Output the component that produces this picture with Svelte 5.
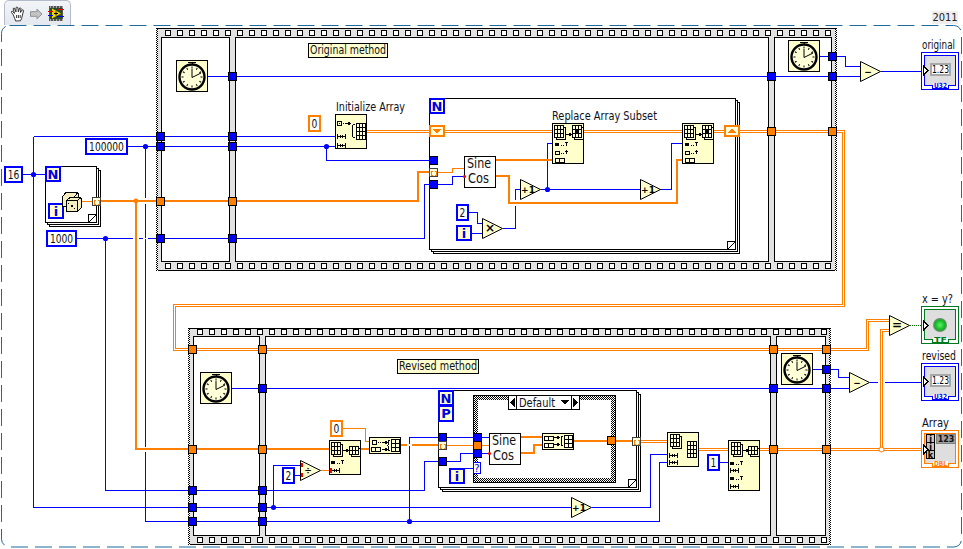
<script>
  const range = (a, n, s) => Array.from({ length: n }, (_, i) => a + i * s);

  const frames = [
    { x: 156, y: 28, r: 836.5, b: 270.5, top: 37.5, bot: 261.5, hx: 165.5, hn: 56,
      cells: [[161.5, 229.5], [235.5, 768.5], [774.5, 831.5]], ht: 30.5, hb: 263.5 },
    { x: 188, y: 327.5, r: 830.5, b: 544.5, top: 336.5, bot: 535.5, hx: 197.5, hn: 53,
      cells: [[193.5, 259.5], [265.5, 770.5], [776.5, 825.5]], ht: 329.5, hb: 537.5 }
  ];

  const blue = [
    'M33.5 136.5H335', 'M128 146.5H335', 'M326.5 146.5V160.5H429', 'M77 238.5H424.5V184.5H429',
    'M208 76.5H860', 'M820 56.5H845.5V66.5H860', 'M881 71.5H921',
    'M22 174.5H45', 'M33.5 136.5V507.5H571', 'M592 507.5H650.5V454.5H667',
    'M145.5 146.5V521.5H659.5V462.5H667', 'M105.5 238.5V490.5H424.5V461.5H439',
    'M273.5 507.5V465.5H300', 'M295 475.5H300', 'M409.5 521.5V437.5H439',
    'M232 388.5H849', 'M813 369.5H838.5V377.5H849', 'M870 382.5H921',
    'M447 437.5H473', 'M447 461.5H460.5V453.5H473', 'M465 468.5H473',
    'M482 437.5H489', 'M482 453.5H489',
    'M438 184.5H452.5V176.5H464', 'M541 189.5H640', 'M547.5 189.5V143.5H552',
    'M660 189.5H671.5V143.5H682', 'M503 228.5H515.5V189.5H520', 'M469 212.5H477.5V223.5H482', 'M472 233.5H482',
    'M720 462.5H728'
  ];
  const gaps = [
    [133, 238, 6, 1], [143, 238, 5, 1], [145, 198, 1, 6], [513, 200, 5, 6], [145, 447, 1, 5], [878, 382, 7, 1], [407, 444, 5, 2]
  ];
  const thick = [
    'M100 201H418V172H429', 'M136 201V449H329', 'M496 160H552', 'M496 176H509V203H677V160H682',
    'M361 449H369', 'M401 445H407', 'M412 445H438', 'M521 437H542', 'M521 453H534V445H542',
    'M574 441H607', 'M615 441H632'
  ];
  const thin = ['M438 172.5H452.5V168.5H464', 'M343 428.5H365.5V441.5H369', 'M321 470.5H330', 'M447 445.5H473', 'M482 445.5H489', 'M81 201.5H92'];
  const dbl = [
    'M367 131.5H429', 'M445 131.5H552', 'M584 131.5H682', 'M714 131.5H724',
    'M740 131.5H843.5V305.5H174.5V349.5H192', 'M192 349.5H867.5V320.5H889',
    'M640 441.5H667', 'M699 449.5H729', 'M760 449.5H921', 'M881.5 449.5V330.5H889'
  ];
  const dots = [[33.5, 174.5], [145.5, 146.5], [326.5, 146.5], [105.5, 238.5], [547.5, 189.5], [273.5, 507.5], [409.5, 521.5]];

  const blueT = [
    [156.5, 136.5], [156.5, 146.5], [156.5, 238.5], [228.5, 136.5], [228.5, 146.5], [228.5, 238.5], [228.5, 76.5],
    [767.5, 76.5], [828.5, 76.5], [828.5, 56.5],
    [188.5, 490.5], [188.5, 507.5], [188.5, 521.5], [258.5, 490.5], [258.5, 507.5], [258.5, 521.5], [258.5, 388.5],
    [769.5, 388.5], [822.5, 388.5], [822.5, 369.5],
    [429.5, 160.5], [429.5, 184.5], [438.5, 437.5], [438.5, 461.5], [473.5, 437.5], [473.5, 453.5]
  ];
  const orangeT = [
    [156.5, 201.5], [228.5, 201.5], [767.5, 131.5], [828.5, 131.5],
    [188.5, 349.5], [188.5, 449.5], [258.5, 349.5], [258.5, 449.5], [769.5, 349.5], [769.5, 449.5], [822.5, 349.5], [822.5, 449.5],
    [473.5, 445.5], [607.5, 440.5]
  ];
  const arrT = [[92.5, 197.5], [429.5, 168.5], [438.5, 441.5], [632.5, 437.5]];
  const clocks = [[176, 60], [788, 40], [200, 372], [781, 353]];
  const ticks = range(0, 12, 30);
</script>

{#snippet grid(x, y, cols, rows, cw, ch)}
  <rect class="cell" {x} {y} width={cols * cw} height={rows * ch} />
  {#each range(1, cols - 1, 1) as c}<line class="ink" x1={x + c * cw} x2={x + c * cw} y1={y} y2={y + rows * ch} />{/each}
  {#each range(1, rows - 1, 1) as r}<line class="ink" x1={x} x2={x + cols * cw} y1={y + r * ch} y2={y + r * ch} />{/each}
{/snippet}
{#snippet stack(x, y, cols, rows, cw, ch)}
  <rect class="cell" x={x + 2.5} y={y + 2.5} width={cols * cw} height={rows * ch} />
  {@render grid(x + .5, y + .5, cols, rows, cw, ch)}
{/snippet}
{#snippet len(x, y)}
  <path class="ink" d="M{x + .5} {y - 2}V{y + 3}M{x + 8.5} {y - 2}V{y + 3}M{x} {y + .5}H{x + 9}M{x + 3.5} {y - 1}V{y + 2}M{x + 5.5} {y - 1}V{y + 2}" />
{/snippet}
{#snippet idx(x, y)}
  <rect class="solid" {x} y={y - 1} width="4" height="3" />
  <path class="ink" d="M{x + 6} {y + 1.5}h1M{x + 8} {y + 1.5}h1M{x + 11.5} {y - 2}v4M{x + 10} {y - 1.5}h3" />
{/snippet}
{#snippet arrow(x, y)}
  <path class="ink" d="M{x} {y + .5}h4" />
  <path class="solid" d="M{x + 3} {y - 1.5}l3 2l-3 2z" />
{/snippet}
{#snippet pill(x, y)}
  <rect class="cell" x={x + .5} y={y + .5} width="9" height="4" />
  <line class="ink" x1={x + 4.5} x2={x + 4.5} y1={y} y2={y + 4} />
{/snippet}
{#snippet node(x, y, w, h)}
  <rect class="node" x={x + .5} y={y + .5} width={w - 1} height={h - 1} />
{/snippet}
{#snippet box(x, y, w, h, color, label)}
  <rect class="{color}-box" x={x + 1} y={y + 1} width={w - 2} height={h - 2} />
  <text class="num" x={x + w / 2} y={y + h - 4} textLength={label.length * 5.8} lengthAdjust="spacingAndGlyphs">{label}</text>
{/snippet}
{#snippet tri(x, y, w, h, label, size)}
  <polygon class="tri" points="{x},{y} {x + w},{y + h / 2} {x},{y + h}" />
  <text class="op {size}" x={x + 7.5} y={y + h / 2 + 3.5}>{label}</text>
{/snippet}
{#snippet sine(x, y)}
  <rect class="white" x={x + .5} y={y + .5} width="31" height="31" />
  <text class="big" x={x + 3} y={y + 12} textLength="24" lengthAdjust="spacingAndGlyphs">Sine</text>
  <text class="big" x={x + 4} y={y + 27} textLength="21" lengthAdjust="spacingAndGlyphs">Cos</text>
  <circle class="red" cx={x + .5} cy={y + 20.5} r="1.6" />
{/snippet}
{#snippet loop(x, y, r, b)}
  <rect class="white" x={x + 4} y={y + 4} width={r - x} height={b - y} />
  <rect class="white" x={x + 2} y={y + 2} width={r - x} height={b - y} />
  <rect class="white" {x} {y} width={r - x} height={b - y} />
  <path class="fold" d="M{r} {b - 8}L{r - 8} {b}V{b - 8}Z" />
{/snippet}
{#snippet indicator(x, y, color, tag)}
  <rect class="{color}-line paper" x={x + .5} y={y + .5} width="37" height="37" />
  <path class="{color}-line pane" d="M{x + 3.5} {y + 3.5}H{x + 34.5}V{y + 33.5}H{x + 27.5}V{y + 36.5}H{x + 11.5}V{y + 33.5}H{x + 3.5}Z" />
  <rect class="white-flat" x={x + 12} y={y + 31} width="15" height="5" />
  <text class="tag {color}-text" x={x + 19.5} y={y + 36} textLength="13" lengthAdjust="spacingAndGlyphs">{tag}</text>
{/snippet}
{#snippet numeric(x, y)}
  <rect class="well" x={x + 9} y={y + 11} width="21" height="13" />
  <rect class="white-flat" x={x + 11} y={y + 13} width="17" height="9" />
  <text class="val" x={x + 19.5} y={y + 21} textLength="17" lengthAdjust="spacingAndGlyphs">1.23</text>
  <polygon class="pin" points="{x + 2.5},{y + 14} {x + 7},{y + 18.5} {x + 2.5},{y + 23}" />
{/snippet}

<div class="page">
  <header class="bar">
    <div class="tab">
      <svg class="ico" width="16" height="16" viewBox="0 0 16 16">
        <path class="hand" d="M3 8.5L1.5 6.5Q1 5 2.5 5.3L4.5 7.5L3.2 3Q3.2 1.7 4.4 2.2L6 6L6 1.6Q6.8 .5 7.8 1.6L8.4 6L9.6 2Q10.6 1.5 11 2.6L10.4 6.5L12.3 3.8Q13.4 3.6 13.5 4.8L12.2 10Q11.8 12.6 10.5 14.8L5.6 15Q5 12.5 3 8.5Z" />
        <path class="hand" d="M6.6 9v3M8.4 9v3M10.2 9v3" />
      </svg>
      <svg class="ico" width="13" height="12" viewBox="0 0 14 12">
        <path class="go" d="M.5 3.5H7.5V.8L13 6L7.5 11.2V8.5H.5Z" />
      </svg>
      <svg class="ico vi-ico" width="16" height="15" viewBox="0 0 16 15">
        <rect class="film" x="1" width="14" height="15" />
        <path class="perf" d="M2 1h1M5 1h1M8 1h1M11 1h1M14 1h1M2 14h1M5 14h1M8 14h1M11 14h1M14 14h1" />
        <rect class="film-in" x="2" y="2" width="12" height="11" />
        <polygon class="vi" points="4,2.5 13,7.5 4,12.5" />
        <path class="vi-r" d="M0 5.5H5M9 3.5H16" />
        <path class="vi-b" d="M0 9.5H5M9 10.5H16" />
        <path class="vi-k" d="M6 7.5h4M8 5.5v4" />
      </svg>
    </div>
    <span class="year">2011</span>
  </header>

  <svg class="diagram" width="963" height="524" viewBox="0 25 963 524">
    <defs>
      <pattern id="checker" width="2" height="2" patternUnits="userSpaceOnUse">
        <rect class="white-flat" width="2" height="2" />
        <rect class="solid" width="1" height="1" />
        <rect class="solid" x="1" y="1" width="1" height="1" />
      </pattern>
      <radialGradient id="led">
        <stop offset="0" stop-color="#5cf06a" />
        <stop offset=".7" stop-color="#10b820" />
        <stop offset="1" stop-color="#808080" />
      </radialGradient>
    </defs>

    <rect class="diagram-edge" x="1.5" y="25.5" width="960" height="521.5" rx="8" />

    {#each frames as f}
      <rect class="strip" x={f.x + .5} y={f.y + .5} width={f.r - f.x - .5} height={f.b - f.y - .5} />
      <rect class="check" x={f.x} y={f.y + 1} width="2" height={f.b - f.y - 1} />
      <rect class="check" x={f.r - 1.5} y={f.y + 1} width="2" height={f.b - f.y - 1} />
      {#each f.cells as c}
        <rect class="white" x={c[0]} y={f.top} width={c[1] - c[0]} height={f.bot - f.top} />
      {/each}
      {#each range(f.hx, f.hn, 12) as hx}
        <rect class="hole" x={hx} y={f.ht} width="5" height="5" />
        <rect class="hole" x={hx} y={f.hb} width="5" height="5" />
      {/each}
    {/each}

    <!-- Structures -->
    {@render loop(45.5, 166.5, 96.5, 222.5)}
    {@render loop(429.5, 98.5, 735.5, 249.5)}
    {@render loop(438.5, 390.5, 636.5, 487.5)}

    <rect class="case" x="473.5" y="395.5" width="142" height="87" />
    <rect class="white-flat" x="478" y="400" width="133" height="78" />

    <!-- Wires -->
    {#each blue as d}<path class="w-blue" {d} />{/each}
    {#each gaps as g}<rect class="white-flat" x={g[0]} y={g[1]} width={g[2]} height={g[3]} />{/each}
    {#each thin as d}<path class="w-thin" {d} />{/each}
    {#each thick as d}<path class="w-thick" {d} />{/each}
    {#each dbl as d}<path class="w-dbl-o" {d} /><path class="w-dbl-w" {d} />{/each}
    <path class="w-bool" d="M910 325.5H921" />
    {#each dots as d}<circle class="dot" cx={d[0]} cy={d[1]} r="2.6" />{/each}
    <circle class="dot-o" cx="136" cy="201" r="2.4" />
    <circle class="ring" cx="881.5" cy="449.5" r="2.5" />

    <!-- Case selector -->
    <rect class="white" x="508.5" y="395.5" width="71" height="14" />
    <path class="ink" d="M516.5 395.5V409.5M571.5 395.5V409.5" />
    <polygon class="solid" points="515,398 510,402.5 515,407" />
    <polygon class="solid" points="573,398 578,402.5 573,407" />
    <polygon class="solid" points="561,400 569,400 565,405" />
    <text class="lbl" x="519" y="406.5" textLength="36" lengthAdjust="spacingAndGlyphs">Default</text>

    <!-- Tunnels -->
    {#each blueT as t}<rect class="tun-b" x={t[0]} y={t[1] - 4} width="8" height="8" />{/each}
    {#each orangeT as t}<rect class="tun-o" x={t[0]} y={t[1] - 4} width="8" height="8" />{/each}
    {#each arrT as t}
      <rect class="tun-a" x={t[0]} y={t[1]} width="8" height="8" />
      <path class="brk" d="M{t[0] + 3.5} {t[1] + 2.5}h-1.5v4h1.5M{t[0] + 5} {t[1] + 2.5}h1.5v4h-1.5" />
    {/each}
    <rect class="sel" x="473.5" y="462.5" width="7" height="11" />
    <text class="q" x="477" y="472">?</text>

    <!-- Shift registers -->
    <rect class="shift" x="430" y="126" width="14" height="10" />
    <path class="sh-f" d="M433 129h8l-4 4.5z" />
    <rect class="shift" x="725" y="126" width="14" height="10" />
    <path class="sh-f" d="M728 133h8l-4 -4.5z" />

    <!-- Clocks -->
    {#each clocks as c}
      <rect class="node" x={c[0] + .5} y={c[1] + .5} width="31" height="31" />
      <circle class="face" cx={c[0] + 16} cy={c[1] + 17} r="12.5" />
      <path class="knob" d="M{c[0] + 12} {c[1] + 2.5}h8M{c[0] + 16} {c[1] + 2}v2.5" />
      {#each ticks as a}
        <line class="thin-k" x1={c[0] + 16} x2={c[0] + 16} y1={c[1] + 6.5} y2={c[1] + 8.5} transform="rotate({a} {c[0] + 16} {c[1] + 17})" />
      {/each}
      <path class="thin-k" d="M{c[0] + 16} {c[1] + 9}V{c[1] + 17.5}L{c[0] + 25} {c[1] + 13}" />
    {/each}

    <!-- Small loop content -->
    <rect class="n-box" x="46" y="167" width="14" height="14" />
    <text class="term" x="53" y="179">N</text>
    <rect class="n-box" x="49" y="204" width="14" height="14" />
    <text class="term" x="56" y="216">i</text>
    <path class="die" d="M62.5 196.5L66 192.5H78L74.5 196.5V206.5H62.5Z" />
    <path class="die" d="M78 192.5V203L74.5 206.5V196.5Z" />
    <path class="die" d="M66.5 200.5L70 197.5H81V208L77.5 211.5H66.5Z" />
    <path class="ink" d="M66.5 200.5H77.5V211.5M77.5 200.5L81 197.5" />
    <rect class="solid" x="71" y="205" width="2" height="2" />
    <rect class="solid" x="68" y="203" width="1" height="1" />
    <rect class="solid" x="74" y="208" width="1" height="1" />

    <!-- Constants -->
    {@render box(4, 166, 19, 17, 'blue', '16')}
    {@render box(85, 138, 43, 17, 'blue', '100000')}
    {@render box(46, 230, 31, 17, 'blue', '1000')}
    {@render box(308, 115, 13, 17, 'orange', '0')}
    {@render box(456, 204, 13, 17, 'blue', '2')}
    {@render box(330, 420, 13, 17, 'orange', '0')}
    {@render box(282, 467, 13, 17, 'blue', '2')}
    {@render box(707, 454, 13, 17, 'blue', '1')}

    <rect class="n-box" x="430" y="99" width="14" height="14" />
    <text class="term" x="437" y="111">N</text>
    <rect class="n-box" x="457" y="226" width="14" height="14" />
    <text class="term" x="464" y="238">i</text>
    <rect class="n-box" x="439" y="391" width="14" height="14" />
    <text class="term" x="446" y="403">N</text>
    <rect class="n-box" x="439" y="406" width="14" height="15" />
    <text class="term" x="446" y="418">P</text>
    <rect class="n-box" x="450" y="469" width="14" height="14" />
    <text class="term" x="457" y="481">i</text>

    <!-- Array functions -->
    {@render node(335, 114, 32, 35)}
    <rect class="cell" x="337.5" y="121.5" width="4" height="4" />
    <rect class="solid" x="339" y="123" width="1" height="1" />
    <path class="ink" d="M343 123.5h1" />
    {@render arrow(345, 123)}
    {@render len(337, 136)}
    {@render len(337, 145)}
    <path class="ink" d="M355 124Q352 124 353 128Q353 130 352 131Q353 132 353 134Q352 138 355 138" />
    {@render grid(356.5, 123.5, 3, 4, 3, 4)}

    {#each [552, 682] as x}
      {@render node(x, 123, 32, 41)}
      {@render stack(x + 2, 125, 3, 3, 3, 4)}
      {@render arrow(x + 14, 134)}
      {@render stack(x + 20, 125, 3, 3, 3, 4)}
      <path class="ink" d="M{x + 23.5} 129.5l3 4m0 -4l-3 4" />
      {@render idx(x + 3, 144)}
      <rect class="cell" x={x + 3.5} y="151.5" width="4" height="3" />
      <path class="ink" d="M{x + 9} 153.5h1M{x + 11} 153.5h1M{x + 14.5} 150v4M{x + 13} 151.5h3" />
      {@render pill(x + 3, 158)}
    {/each}

    {@render node(329, 440, 32, 35)}
    {@render stack(331, 442, 3, 3, 3, 4)}
    {@render arrow(343, 450)}
    {@render stack(349, 446, 3, 2, 3, 4)}
    {@render idx(331, 462)}
    {@render len(331, 470)}
    <rect class="red-f" x="330" y="468" width="2" height="5" />

    {@render node(369, 437, 32, 17)}
    <rect class="cell" x="372.5" y="440.5" width="4" height="4" />
    <path class="ink" d="M378 442.5h1M380 442.5h1" />
    {@render arrow(382, 442)}
    {@render pill(371, 447)}
    {@render arrow(382, 449)}
    <path class="ink" d="M390 440Q388 440 388 445.5Q388 451 390 451" />
    {@render grid(391.5, 439.5, 2, 3, 4, 4)}

    {@render node(542, 433, 32, 17)}
    {@render pill(544, 436)}
    {@render arrow(554, 437)}
    {@render pill(544, 443)}
    {@render arrow(554, 444)}
    <path class="ink" d="M563 436Q561 436 561 441Q561 446 563 446" />
    {@render grid(564.5, 435.5, 2, 3, 4, 4)}

    {@render node(667, 432, 32, 35)}
    {@render stack(670, 434, 3, 3, 3, 4)}
    {@render len(669, 455)}
    {@render len(669, 462)}
    {@render grid(687.5, 441.5, 3, 4, 3, 4)}

    {@render node(728, 440, 32, 51)}
    {@render stack(731, 442, 3, 3, 3, 4)}
    {@render arrow(743, 450)}
    {@render stack(748, 446, 3, 2, 3, 4)}
    {@render idx(730, 463)}
    {@render len(730, 470)}
    {@render idx(730, 478)}
    {@render len(730, 486)}

    {@render sine(464, 156)}
    {@render sine(489, 433)}

    <!-- Triangles -->
    {@render tri(520.5, 179.5, 20, 20, '+1', 'm')}
    {@render tri(640.5, 179.5, 20, 20, '+1', 'm')}
    {@render tri(482.5, 218.5, 20, 20, '×', 'l')}
    {@render tri(860.5, 61.5, 20, 20, '−', 'm')}
    {@render tri(849.5, 372.5, 20, 20, '−', 'm')}
    {@render tri(889.5, 315.5, 20, 20, '=', 'l')}
    {@render tri(300.5, 460.5, 20, 20, '÷', 'm')}
    {@render tri(571.5, 497.5, 20, 20, '+1', 'm')}
    <rect class="red-f" x="301" y="463" width="2" height="4" />
    <rect class="red-f" x="301" y="473" width="2" height="4" />

    <!-- Labels -->
    <rect class="note" x="308.5" y="43.5" width="79" height="14" />
    <text class="lbl" x="310" y="54" textLength="76" lengthAdjust="spacingAndGlyphs">Original method</text>
    <rect class="note" x="397.5" y="359.5" width="81" height="14" />
    <text class="lbl" x="399" y="370" textLength="78" lengthAdjust="spacingAndGlyphs">Revised method</text>
    <text class="lbl" x="336" y="111" textLength="69" lengthAdjust="spacingAndGlyphs">Initialize Array</text>
    <text class="lbl" x="552" y="120" textLength="105" lengthAdjust="spacingAndGlyphs">Replace Array Subset</text>
    <text class="lbl" x="922" y="49" textLength="33" lengthAdjust="spacingAndGlyphs">original</text>
    <text class="lbl" x="922" y="303" textLength="31" lengthAdjust="spacingAndGlyphs">x = y?</text>
    <text class="lbl" x="922" y="360" textLength="34" lengthAdjust="spacingAndGlyphs">revised</text>
    <text class="lbl" x="922" y="427" textLength="27" lengthAdjust="spacingAndGlyphs">Array</text>

    <!-- Indicators -->
    {@render indicator(921, 52, 'blue', 'U32')}
    {@render numeric(921, 52)}
    {@render indicator(921, 363, 'blue', 'U32')}
    {@render numeric(921, 363)}
    {@render indicator(921, 306, 'green', 'TF')}
    <circle class="led" cx="940" cy="325" r="7" />
    <polygon class="pin" points="923.5,321 928,325.5 923.5,330" />
    {@render indicator(921, 430, 'orange', 'DBL')}
    {#each ['i', 'j', 'k'] as l, i}
      <rect class="dim" x="926.5" y={434.5 + i * 8} width="8" height="8" />
      <text class="dim-t" x="930.5" y={441.5 + i * 8}>{l}</text>
    {/each}
    <rect class="disp" x="936.5" y="434.5" width="19" height="9" />
    <text class="disp-t" x="946" y="442">123</text>
    <polygon class="pin" points="923.5,445 928,449.5 923.5,454" />
  </svg>
</div>

<style>
  :global(body) { margin: 0; background: #fff; }
  .page { width: 963px; height: 549px; overflow: hidden; background: #fff; }
  .bar { height: 25px; display: flex; justify-content: space-between; align-items: flex-end; padding: 0 5px 0 4px; box-sizing: border-box; }
  .tab { width: 67px; height: 25px; box-sizing: border-box; display: flex; align-items: center; gap: 4px; padding: 1px 0 0 5px; background: linear-gradient(#f2f4f8, #e4e8ef); border: 1px solid #b4bccb; border-bottom: none; border-radius: 5px 5px 0 0; }
  .ico { flex: none; display: block; }
  .vi-ico { margin-left: 1px; }
  .hand { fill: #fff; stroke: #222; stroke-width: .9; }
  .go { fill: #c4c4c4; stroke: #8a8a8a; }
  .film { fill: #555; }
  .perf { stroke: #fff; fill: none; }
  .film-in { fill: #2c4a2c; }
  .vi { fill: #f5d800; }
  .vi-r { stroke: #e00000; fill: none; }
  .vi-b { stroke: #0000e0; fill: none; }
  .vi-k { stroke: #000; fill: none; }
  .year { width: 26px; height: 13px; margin-bottom: 1px; background: #eee; font: 11px "DejaVu Sans Condensed", "DejaVu Sans", sans-serif; line-height: 13px; color: #222; text-align: center; }

  .diagram { display: block; shape-rendering: crispEdges; font-family: "DejaVu Sans", sans-serif; }
  .diagram-edge { fill: none; stroke: #1f6a9a; stroke-dasharray: 17 7; shape-rendering: geometricPrecision; }
  .strip { fill: #e2e2e2; stroke: #000; }
  .check { fill: url(#checker); }
  .white { fill: #fff; stroke: #000; }
  .white-flat { fill: #fff; }
  .hole { fill: #fff; stroke: #000; }
  .case { fill: url(#checker); stroke: #000; }
  .fold { fill: #fff; stroke: #000; }
  .ink { fill: none; stroke: #000; stroke-width: 1; }
  .solid { fill: #000; }
  .cell { fill: #ffffd8; stroke: #000; }
  .node { fill: #ffffcc; stroke: #000; }
  .note { fill: #ffffd0; stroke: #000; }

  .w-blue { fill: none; stroke: #0000ff; }
  .w-thin { fill: none; stroke: #ff8000; }
  .w-thick { fill: none; stroke: #ff8000; stroke-width: 2; }
  .w-dbl-o { fill: none; stroke: #ff8000; stroke-width: 3; }
  .w-dbl-w { fill: none; stroke: #fff; stroke-width: 1; }
  .w-bool { fill: none; stroke: #006a00; stroke-dasharray: 1 1; }
  .dot { fill: #0000ff; shape-rendering: geometricPrecision; }
  .dot-o { fill: #ff8000; shape-rendering: geometricPrecision; }
  .ring { fill: #fff; stroke: #ff8000; shape-rendering: geometricPrecision; }

  .tun-b { fill: #0000ff; stroke: #000; }
  .tun-o { fill: #ff8000; stroke: #000; }
  .tun-a { fill: #ffffdc; stroke: #404040; }
  .brk { fill: none; stroke: #ff8000; }
  .sel { fill: #fff; stroke: #0000ff; }
  .q { font-size: 10px; text-anchor: middle; fill: #0000c0; }
  .shift { fill: #ffffdc; stroke: #ff8000; stroke-width: 2; }
  .sh-f { fill: #ff8000; }

  .face { fill: #ffffd8; stroke: #000; stroke-width: 2.4; shape-rendering: geometricPrecision; }
  .knob { fill: none; stroke: #000; stroke-width: 1; }
  .thin-k { fill: none; stroke: #000; stroke-width: 1; shape-rendering: geometricPrecision; }

  .die { fill: #f3edc0; stroke: #000; stroke-linejoin: round; }
  .blue-box { stroke: #0000ff; stroke-width: 2; fill: #fff; }
  .orange-box { stroke: #ff8000; stroke-width: 2; fill: #fff; }
  .n-box { stroke: #0000ff; stroke-width: 2; fill: #ffffcc; }
  .num { font-size: 12px; text-anchor: middle; fill: #111; }
  .term { font-size: 13px; font-weight: 700; text-anchor: middle; fill: #0000e0; }
  .big { font-size: 14px; fill: #111; }
  .lbl { font-size: 11.5px; fill: #101020; }
  .red { fill: #f00000; shape-rendering: geometricPrecision; }
  .red-f { fill: #f00000; }
  .tri { fill: #ffffcc; stroke: #000; shape-rendering: geometricPrecision; }
  .op { font-weight: 700; fill: #000; text-anchor: middle; }
  .op.m { font-size: 9px; }
  .op.l { font-size: 12px; }

  .paper { fill: #fff; }
  .pane { fill: #dedede; }
  .blue-line { stroke: #0000ff; }
  .green-line { stroke: #007a20; }
  .orange-line { stroke: #ff8000; }
  .tag { font-size: 7px; font-weight: 700; text-anchor: middle; }
  .blue-text { fill: #0000ff; }
  .green-text { fill: #007a20; }
  .orange-text { fill: #ff8000; }
  .well { fill: #a8a8a8; }
  .val { font-size: 10px; text-anchor: middle; fill: #000; }
  .pin { fill: #fff; stroke: #000; }
  .led { fill: url(#led); shape-rendering: geometricPrecision; }
  .dim { fill: #c4c4c4; stroke: #000; }
  .dim-t { font-size: 8px; font-weight: 700; text-anchor: middle; fill: #000; }
  .disp { fill: #a0a0a0; stroke: #808080; }
  .disp-t { font-size: 8px; font-weight: 700; text-anchor: middle; fill: #111; }
</style>
